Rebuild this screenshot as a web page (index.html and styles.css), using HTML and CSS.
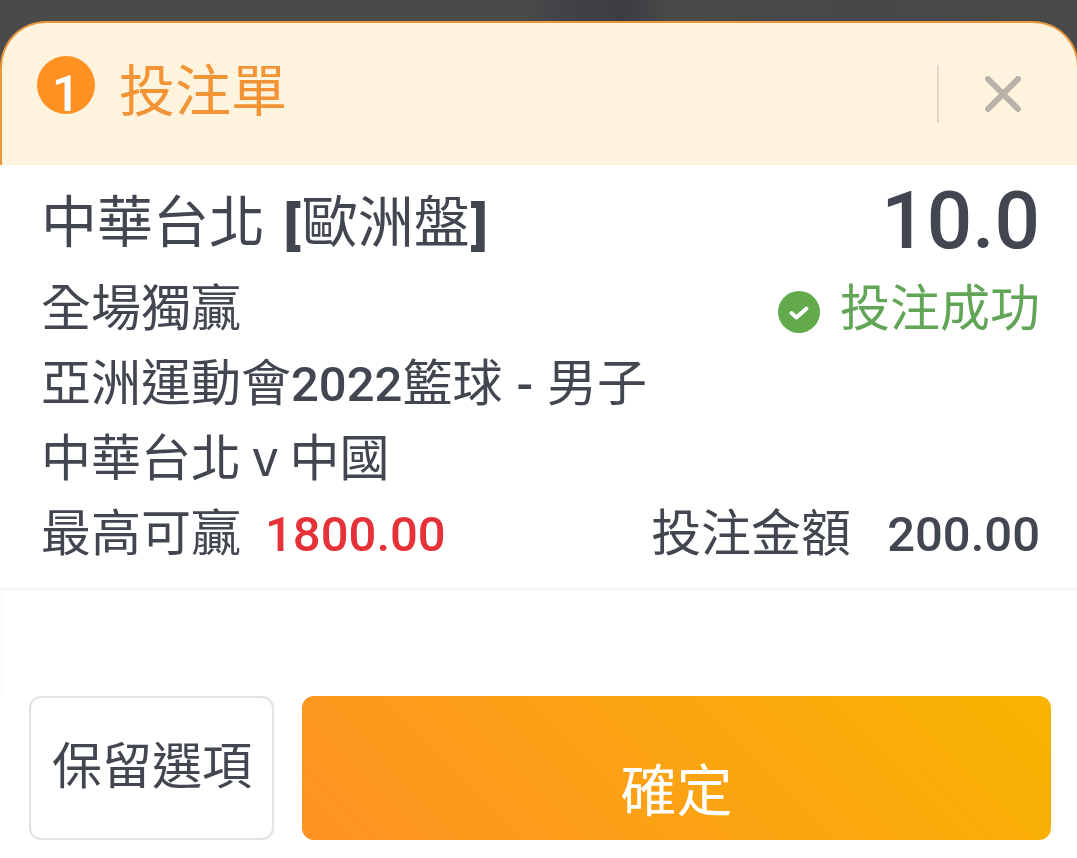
FILE: index.html
```html
<!DOCTYPE html>
<html lang="zh-Hant">
<head>
<meta charset="utf-8">
<meta name="viewport" content="width=device-width, initial-scale=1">
<title>投注單</title>
<link rel="stylesheet" href="styles.css">
</head>
<body>
<main class="sheet">
  <header class="sheet-header">
    <span class="count">1</span>
    <h1 class="sheet-title">投注單</h1>
    <button class="close" type="button" aria-label="關閉">
      <svg class="close-icon" viewBox="0 0 36 36" aria-hidden="true"><path d="M3 3L33 33M33 3L3 33"/></svg>
    </button>
  </header>
  <section class="bet">
    <div class="row row-top">
      <h2 class="pick">中華台北 <span class="market"><b>[</b>歐洲盤<b>]</b></span></h2>
      <span class="odds">10.0</span>
    </div>
    <div class="row">
      <span>全場獨贏</span>
      <span class="status">
        <svg class="status-icon" viewBox="0 0 42 42" aria-hidden="true"><circle cx="21" cy="21" r="21"/><path d="M13.500 22L18.500 26.500L28.500 17.500"/></svg>
        投注成功
      </span>
    </div>
    <p class="row-text">亞洲運動會<span class="num">2022</span>籃球<span class="num dash">-</span>男子</p>
    <p class="row-text">中華台北 v 中國</p>
    <div class="row">
      <span class="pair">最高可贏 <span class="num win">1800.00</span></span>
      <span class="pair stake">投注金額 <span class="num">200.00</span></span>
    </div>
  </section>
  <footer class="actions">
    <button class="btn keep" type="button">保留選項</button>
    <button class="btn confirm" type="button">確定</button>
  </footer>
</main>
</body>
</html>
```
FILE: styles.css
```css
* {
  box-sizing: border-box;
}

body {
  margin: 0;
  padding-top: 21px;
  overflow-x: hidden;
  background: #fff linear-gradient(90deg, #4a4a4a 0, #4a4a4a 49%, #424348 52%, #3c3d42 58%, #4a4a4a 62%, #48484b 80%, #4a4a4a 100%) no-repeat 0 0 / 100% 80px;
  color: #424650;
  font-family: "Noto Sans CJK TC", sans-serif;
  font-size: 50px;
  line-height: 75px;
}

h1, h2, p {
  margin: 0;
  font-weight: 400;
}

button {
  font: inherit;
  color: inherit;
  cursor: pointer;
}

.sheet-header {
  display: flex;
  align-items: center;
  height: 144px;
  margin-right: -2px;
  padding: 0 38px 8px 35px;
  border: 2px solid #e8963c;
  border-bottom: 0;
  border-radius: 46px 46px 0 0;
  background: #fef3dc;
}

.count {
  width: 58px;
  height: 58px;
  margin-bottom: 10px;
  padding-top: 9px;
  border-radius: 50%;
  background: #ff9022;
  color: #fff;
  font-family: Roboto, sans-serif;
  font-size: 50px;
  font-weight: 500;
  line-height: 58px;
  text-align: center;
}

.sheet-title {
  margin-bottom: 6px;
  margin-left: 24px;
  color: #f29436;
  font-size: 56px;
  line-height: 80px;
}

.close {
  display: flex;
  align-items: center;
  justify-content: flex-end;
  width: 102px;
  height: 58px;
  margin-top: 8px;
  margin-left: auto;
  padding: 0 18px;
  border: 0;
  border-left: 2px solid #e3d9c9;
  background: none;
}

.close-icon {
  width: 36px;
  height: 36px;
  fill: none;
  stroke: #b8b2a8;
  stroke-width: 6;
  stroke-linecap: round;
}

.bet {
  padding: 8px 37px 20px 41px;
  border-bottom: 4px solid #f8f8f8;
  background: #fff;
}

.row {
  display: flex;
  justify-content: space-between;
}

.row-top {
  height: 94px;
}

.pick {
  font-size: 56px;
  line-height: 90px;
}

.pick b {
  font-family: "Open Sans", sans-serif;
  font-weight: 800;
  line-height: 1;
}

.market {
  margin-left: 6px;
}

.odds {
  font-family: Roboto, sans-serif;
  font-size: 80px;
  font-weight: 500;
  line-height: 96px;
}

.status {
  display: flex;
  align-items: center;
  gap: 20px;
  color: #62a557;
}

.status-icon {
  width: 42px;
  height: 42px;
  margin-top: 14px;
}

.status-icon circle {
  fill: #62aa4c;
}

.status-icon path {
  fill: none;
  stroke: #fff;
  stroke-width: 4;
  stroke-linecap: round;
  stroke-linejoin: round;
}

.num {
  font-family: Roboto, sans-serif;
  font-size: 49px;
  font-weight: 500;
  line-height: 1;
}

.dash {
  margin: 0 14px;
}

.pair {
  display: flex;
  align-items: baseline;
  gap: 24px;
}

.stake {
  gap: 36px;
}

.win {
  color: #e53238;
}

.actions {
  display: flex;
  gap: 28px;
  padding: 105px 26px 18px 29px;
  background: #fff linear-gradient(#fcfcfc, #fcfcfc) no-repeat 0 0 / 4px 105px;
}

.btn {
  height: 144px;
  border: 0;
  border-radius: 12px;
}

.keep {
  flex: none;
  padding: 0 20px 12px 21px;
  border: 2px solid #e2e2e4;
  background: #fff;
}

.confirm {
  flex: 1;
  padding: 36px 0 0;
  background: linear-gradient(45deg, #ff9224, #f8b400);
  color: #fff;
  font-size: 56px;
}
```
